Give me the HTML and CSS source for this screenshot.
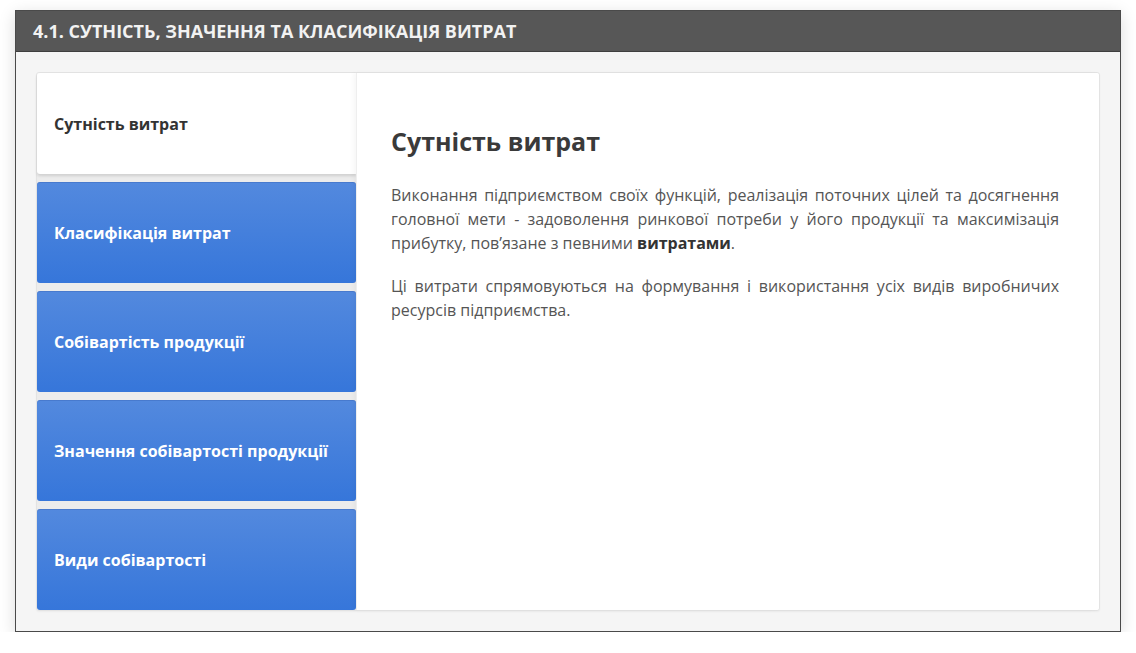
FILE: index.html
```html
<!DOCTYPE html>
<html lang="uk">
<head>
<meta charset="utf-8">
<title>4.1. Сутність, значення та класифікація витрат</title>
<link rel="stylesheet" href="styles.css">
</head>
<body>
<div class="window">
  <div class="window-header">4.1. Сутність, значення та класифікація витрат</div>
  <div class="window-body">
    <div class="card">
      <div class="tabs">
        <div class="tab active">Сутність витрат</div>
        <div class="tab">Класифікація витрат</div>
        <div class="tab">Собівартість продукції</div>
        <div class="tab">Значення собівартості продукції</div>
        <div class="tab">Види собівартості</div>
      </div>
      <div class="panel">
        <h2 class="panel-title">Сутність витрат</h2>
        <p class="panel-text">Виконання підприємством своїх функцій, реалізація поточних цілей та досягнення головної мети - задоволення ринкової потреби у його продукції та максимізація прибутку, пов’язане з певними <b>витратами</b>.</p>
        <p class="panel-text">Ці витрати спрямовуються на формування і використання усіх видів виробничих ресурсів підприємства.</p>
      </div>
    </div>
  </div>
</div>
</body>
</html>
```

FILE: styles.css
```css
html, body {
  margin: 0;
  padding: 0;
  background: #ffffff;
  font-family: "Open Sans", "Noto Sans", "DejaVu Sans", sans-serif;
}

.window {
  margin: 10px 0 0 15px;
  width: 1106px;
  height: 622px;
  box-sizing: border-box;
  border: 1px solid #4a4a4a;
  box-shadow: 0 4px 16px rgba(0, 0, 0, 0.14);
  display: flex;
  flex-direction: column;
  background: #f5f5f5;
}

.window-header {
  height: 41px;
  box-sizing: border-box;
  background: #575757;
  color: #f2f2f2;
  font-weight: 700;
  font-size: 18px;
  text-transform: uppercase;
  padding-left: 17px;
  display: flex;
  align-items: center;
  border-bottom: 1px solid #3f3f3f;
}

.window-body {
  flex: 1;
  padding: 20px 20px 20px 20px;
  display: flex;
}

.card {
  flex: 1;
  display: flex;
  background: #ffffff;
  border: 1px solid #e3e3e3;
  border-radius: 3px;
  box-shadow: 0 1px 2px rgba(0, 0, 0, 0.04);
}

.tabs {
  width: 319px;
  display: flex;
  flex-direction: column;
  gap: 8px;
  background: #ececec;
  border-radius: 3px 0 0 3px;
}

.tab {
  flex: 1;
  display: flex;
  align-items: center;
  padding-left: 17px;
  font-size: 16px;
  font-weight: 700;
  color: #ffffff;
  border-radius: 3px;
  background: linear-gradient(to bottom, #5389de 0%, #3676da 100%);
  box-shadow: inset 0 1px 0 rgba(40, 80, 160, 0.25);
}

.tab.active {
  background: #ffffff;
  color: #333333;
  border-radius: 3px 0 0 3px;
  box-shadow: 0 2px 3px rgba(0, 0, 0, 0.12);
}

.panel {
  flex: 1;
  padding: 51px 40px 20px 34px;
  background: #ffffff;
  border-left: 1px solid #eeeeee;
  box-shadow: -3px 0 4px rgba(0, 0, 0, 0.03);
  border-radius: 0 3px 3px 0;
  color: #555555;
}

.panel-title {
  margin: 0 0 25px 0;
  font-size: 25px;
  font-weight: 700;
  color: #3a3a3a;
  line-height: 34px;
}

.panel-text {
  margin: 0 0 19px 0;
  font-size: 16px;
  line-height: 24px;
  text-align: justify;
}

.panel-text b {
  color: #333333;
}
```
